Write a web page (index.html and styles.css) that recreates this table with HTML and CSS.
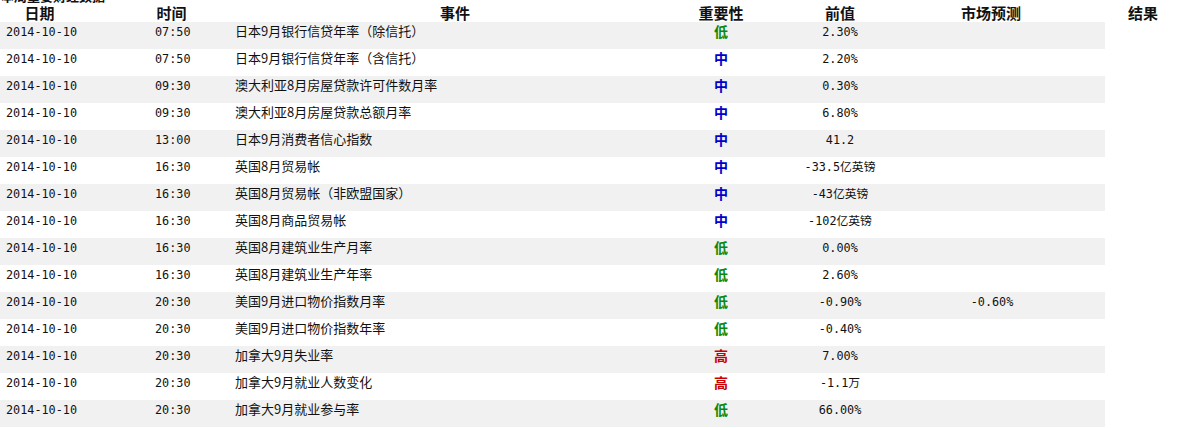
FILE: index.html
```html
<!DOCTYPE html>
<html lang="zh-CN">
<head>
<meta charset="utf-8">
<title>财经日历</title>
<link rel="stylesheet" href="styles.css">
</head>
<body>
<div class="caption"><span>本周重要财经数据</span></div>
<div class="head">
  <div>日期</div><div>时间</div><div>事件</div><div>重要性</div><div>前值</div><div>市场预测</div><div>结果</div>
</div>
<div class="rows">
  <div class="row"><div class="c-date">2014-10-10</div><div class="c-time">07:50</div><div class="c-ev">日本9月银行信贷年率（除信托）</div><div class="c-imp low">低</div><div class="c-num">2.30%</div><div class="c-num"></div><div></div></div>
  <div class="row"><div class="c-date">2014-10-10</div><div class="c-time">07:50</div><div class="c-ev">日本9月银行信贷年率（含信托）</div><div class="c-imp mid">中</div><div class="c-num">2.20%</div><div class="c-num"></div><div></div></div>
  <div class="row"><div class="c-date">2014-10-10</div><div class="c-time">09:30</div><div class="c-ev">澳大利亚8月房屋贷款许可件数月率</div><div class="c-imp mid">中</div><div class="c-num">0.30%</div><div class="c-num"></div><div></div></div>
  <div class="row"><div class="c-date">2014-10-10</div><div class="c-time">09:30</div><div class="c-ev">澳大利亚8月房屋贷款总额月率</div><div class="c-imp mid">中</div><div class="c-num">6.80%</div><div class="c-num"></div><div></div></div>
  <div class="row"><div class="c-date">2014-10-10</div><div class="c-time">13:00</div><div class="c-ev">日本9月消费者信心指数</div><div class="c-imp mid">中</div><div class="c-num">41.2</div><div class="c-num"></div><div></div></div>
  <div class="row"><div class="c-date">2014-10-10</div><div class="c-time">16:30</div><div class="c-ev">英国8月贸易帐</div><div class="c-imp mid">中</div><div class="c-num">-33.5亿英镑</div><div class="c-num"></div><div></div></div>
  <div class="row"><div class="c-date">2014-10-10</div><div class="c-time">16:30</div><div class="c-ev">英国8月贸易帐（非欧盟国家）</div><div class="c-imp mid">中</div><div class="c-num">-43亿英镑</div><div class="c-num"></div><div></div></div>
  <div class="row"><div class="c-date">2014-10-10</div><div class="c-time">16:30</div><div class="c-ev">英国8月商品贸易帐</div><div class="c-imp mid">中</div><div class="c-num">-102亿英镑</div><div class="c-num"></div><div></div></div>
  <div class="row"><div class="c-date">2014-10-10</div><div class="c-time">16:30</div><div class="c-ev">英国8月建筑业生产月率</div><div class="c-imp low">低</div><div class="c-num">0.00%</div><div class="c-num"></div><div></div></div>
  <div class="row"><div class="c-date">2014-10-10</div><div class="c-time">16:30</div><div class="c-ev">英国8月建筑业生产年率</div><div class="c-imp low">低</div><div class="c-num">2.60%</div><div class="c-num"></div><div></div></div>
  <div class="row"><div class="c-date">2014-10-10</div><div class="c-time">20:30</div><div class="c-ev">美国9月进口物价指数月率</div><div class="c-imp low">低</div><div class="c-num">-0.90%</div><div class="c-num">-0.60%</div><div></div></div>
  <div class="row"><div class="c-date">2014-10-10</div><div class="c-time">20:30</div><div class="c-ev">美国9月进口物价指数年率</div><div class="c-imp low">低</div><div class="c-num">-0.40%</div><div class="c-num"></div><div></div></div>
  <div class="row"><div class="c-date">2014-10-10</div><div class="c-time">20:30</div><div class="c-ev">加拿大9月失业率</div><div class="c-imp high">高</div><div class="c-num">7.00%</div><div class="c-num"></div><div></div></div>
  <div class="row"><div class="c-date">2014-10-10</div><div class="c-time">20:30</div><div class="c-ev">加拿大9月就业人数变化</div><div class="c-imp high">高</div><div class="c-num">-1.1万</div><div class="c-num"></div><div></div></div>
  <div class="row"><div class="c-date">2014-10-10</div><div class="c-time">20:30</div><div class="c-ev">加拿大9月就业参与率</div><div class="c-imp low">低</div><div class="c-num">66.00%</div><div class="c-num"></div><div></div></div>
</div>
</body>
</html>
```

FILE: styles.css
```css
html, body {
  margin: 0;
  padding: 0;
  background: #fff;
  color: #000;
  font-family: "Noto Sans CJK SC", "Liberation Sans", sans-serif;
  overflow: hidden;
}

.caption {
  height: 5px;
  overflow: hidden;
}
.caption span {
  display: block;
  margin-top: -12px;
  font-size: 13px;
  line-height: 16px;
  font-weight: 700;
  color: #111;
  padding-left: 1px;
}

.head {
  display: grid;
  grid-template-columns: 79px 185px 382px 150px 88px 214px 90px;
  height: 17px;
  align-items: start;
}
.head > div {
  text-align: center;
  font-size: 15px;
  font-weight: 700;
  line-height: 15px;
  color: #111;
}

.row {
  display: grid;
  grid-template-columns: 150px 80px 446px 90px 148px 156px 35px;
  width: 1105px;
  height: 27px;
  align-items: start;
  line-height: 19px;
  font-size: 12px;
}
.row:nth-child(odd) {
  background: #f1f1f1;
}

.c-date, .c-time, .c-num {
  font-family: "DejaVu Sans Mono", "Noto Sans CJK SC", monospace;
  font-size: 11.8px;
  line-height: 20px;
  color: #111;
}
.c-date { padding-left: 6px; }
.c-time { padding-left: 5px; }
.c-num {
  text-align: center;
}

.c-ev {
  padding-left: 5px;
  font-size: 13px;
  line-height: 18px;
  color: #111;
  white-space: nowrap;
}

.c-imp {
  text-align: center;
  font-size: 14px;
  font-weight: 700;
  line-height: 18px;
}
.low { color: #0a8a0a; }
.mid { color: #0000cc; }
.high { color: #cc0000; }
```
